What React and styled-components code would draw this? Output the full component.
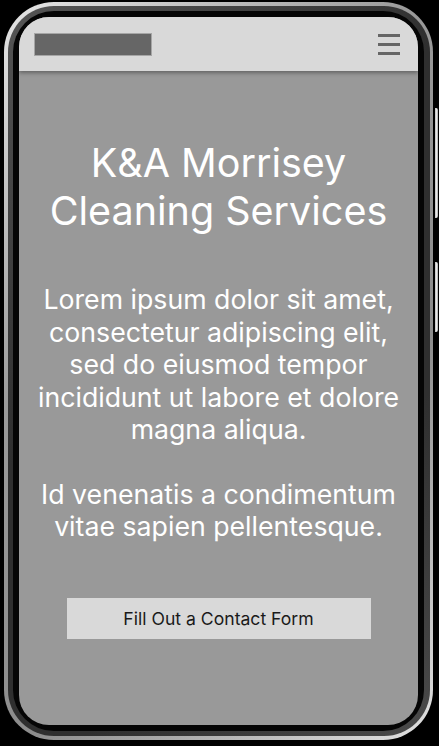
import React from "react";
import styled, { createGlobalStyle } from "styled-components";

const Global = createGlobalStyle`
  html, body { margin: 0; padding: 0; background: #000; }
  body { font-family: Inter, "Noto Sans", sans-serif; }
`;

const Stage = styled.div`
  width: 439px;
  height: 746px;
  background: #000;
  position: relative;
  overflow: hidden;
`;

const Shell = styled.div`
  position: relative;
  margin: 2px 0 0 4px;
  width: 429px;
  height: 738px;
  box-sizing: border-box;
  border-radius: 50px;
  padding: 4px 3px 4px 4px;
  background: linear-gradient(135deg, #e6e6e6 0%, #9a9a9a 35%, #8c8c8c 65%, #e2e2e2 100%);
`;

const Band = styled.div`
  height: 100%;
  box-sizing: border-box;
  border-radius: 46px;
  padding: 5px 6px 5px 5px;
  background: linear-gradient(135deg, #555 0%, #2f2f2f 40%, #2f2f2f 70%, #4a4a4a 100%);
`;

const Bezel = styled.div`
  height: 100%;
  box-sizing: border-box;
  border-radius: 41px;
  padding: 6px;
  background: #050505;
`;

const Screen = styled.div`
  height: 100%;
  border-radius: 30px;
  overflow: hidden;
  background: #999;
  display: flex;
  flex-direction: column;
`;

const SideButton = styled.div`
  position: absolute;
  right: -5px;
  top: ${(p) => p.$top}px;
  height: ${(p) => p.$h}px;
  width: 3px;
  border-radius: 0 2px 2px 0;
  background: linear-gradient(90deg, #bbb, #f2f2f2 60%, #999);
`;

const Header = styled.header`
  height: 54px;
  flex: none;
  background: #d9d9d9;
  box-shadow: 0 2px 4px rgba(0, 0, 0, 0.35);
  display: flex;
  align-items: center;
  justify-content: space-between;
  padding: 0 18px 0 15px;
  position: relative;
  z-index: 1;
`;

const Logo = styled.div`
  width: 116px;
  height: 21px;
  background: #666;
  border: 1px solid #a6a6a6;
  margin-top: 1px;
`;

const Burger = styled.div`
  width: 22px;
  display: flex;
  flex-direction: column;
  gap: 6px;
  margin-top: 1px;
`;

const BurgerLine = styled.span`
  display: block;
  height: 3px;
  background: #666;
`;

const Main = styled.main`
  flex: 1;
  display: flex;
  flex-direction: column;
  align-items: center;
  padding: 68px 15px 0;
  color: #fff;
  text-align: center;
`;

const Title = styled.h1`
  margin: 0;
  font-family: Inter, "Noto Sans", sans-serif;
  font-weight: 400;
  font-size: 39.5px;
  line-height: 48px;
  color: #fff;
`;

const Text = styled.p`
  margin: ${(p) => p.$mt}px 0 0;
  font-family: Inter, "Noto Sans", sans-serif;
  font-weight: 400;
  font-size: 26.7px;
  line-height: 32.5px;
  color: #fff;
`;

const CTA = styled.button`
  margin-top: 55px;
  width: 304px;
  height: 41px;
  flex: none;
  border: none;
  background: #d9d9d9;
  color: #1a1a1a;
  font-family: Inter, "Noto Sans", sans-serif;
  font-size: 17.6px;
  cursor: pointer;
`;

export default function App() {
  return (
    <Stage>
      <Global />
      <Shell>
        <SideButton $top={106} $h={110} />
        <SideButton $top={260} $h={70} />
        <Band>
          <Bezel>
            <Screen>
              <Header>
                <Logo />
                <Burger>
                  <BurgerLine />
                  <BurgerLine />
                  <BurgerLine />
                </Burger>
              </Header>
              <Main>
                <Title>
                  K&amp;A Morrisey
                  <br />
                  Cleaning Services
                </Title>
                <Text $mt={48}>
                  Lorem ipsum dolor sit amet, consectetur adipiscing elit, sed do
                  eiusmod tempor incididunt ut labore et dolore magna aliqua.
                </Text>
                <Text $mt={32}>
                  Id venenatis a condimentum vitae sapien pellentesque.
                </Text>
                <CTA>Fill Out a Contact Form</CTA>
              </Main>
            </Screen>
          </Bezel>
        </Band>
      </Shell>
    </Stage>
  );
}
